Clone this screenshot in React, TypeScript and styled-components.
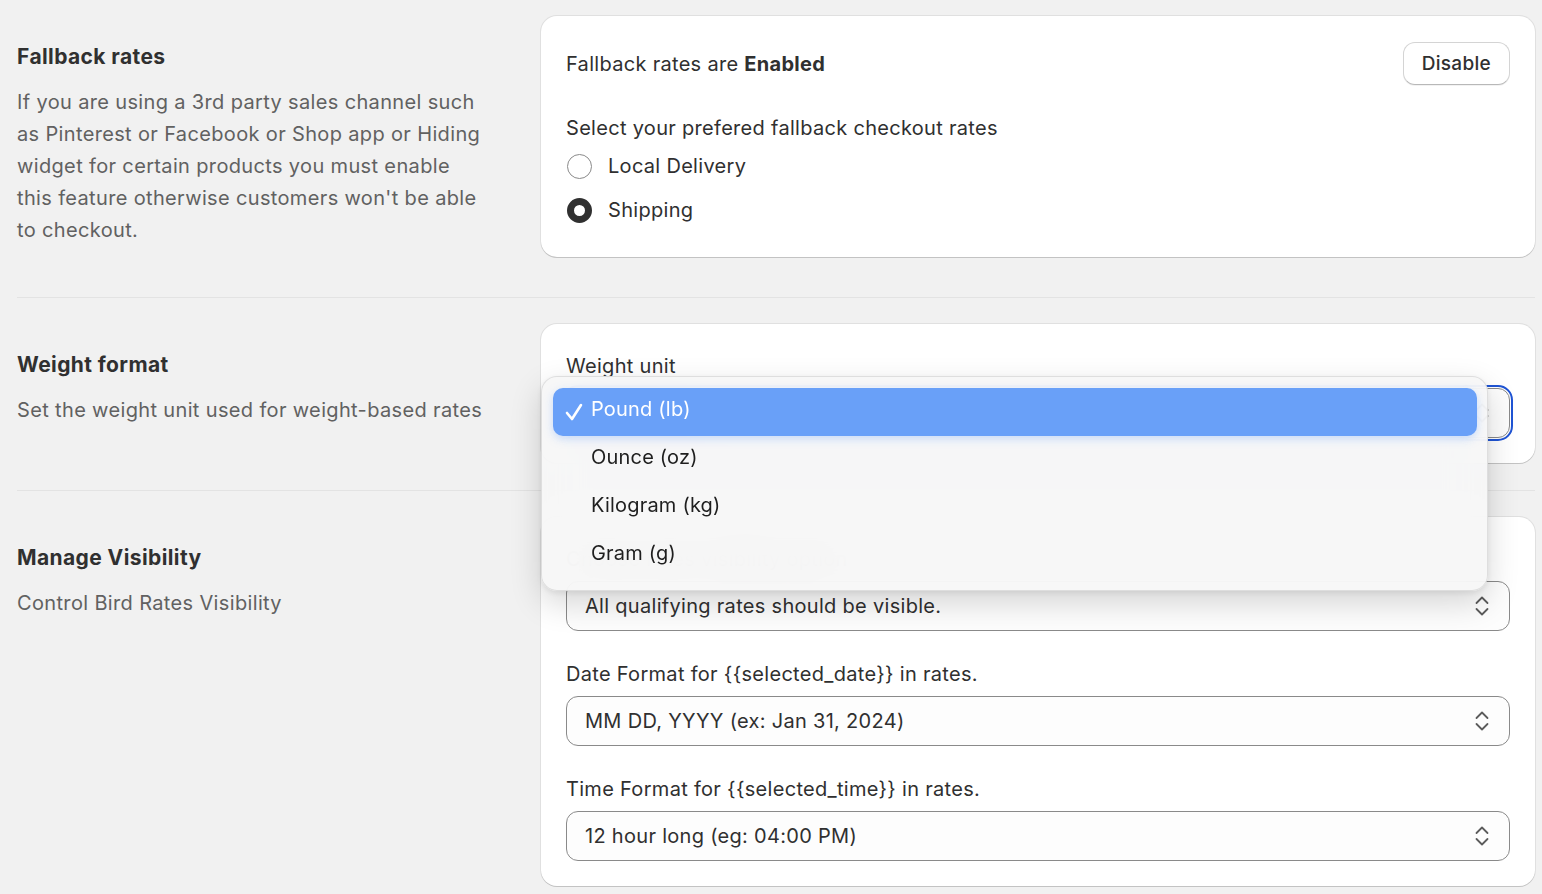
import { createGlobalStyle } from "styled-components";
import styled from "styled-components";

const GlobalStyle = createGlobalStyle`
  html, body {
    margin: 0;
    padding: 0;
    background: #f1f1f1;
  }
  body {
    font-family: "Inter", "Noto Sans", sans-serif;
    color: #303030;
    -webkit-font-smoothing: antialiased;
  }
`;

const Page = styled.div`
  padding: 16px 7px 0 17px;
  min-height: 894px;
  box-sizing: border-box;
`;

const Section = styled.section<{ $gapBelow?: number }>`
  display: grid;
  grid-template-columns: 483px 1fr;
  column-gap: 41px;
  align-items: start;
  margin-bottom: ${(p) => p.$gapBelow ?? 27}px;
`;

const Aside = styled.div`
  padding-top: 29px;
`;

const Title = styled.h2`
  margin: 0;
  font-size: 21px;
  line-height: 24px;
  font-weight: 650;
  letter-spacing: 0.4px;
  color: #303030;
`;

const Desc = styled.p`
  margin: 17px 0 0;
  max-width: 468px;
  font-size: 20px;
  line-height: 32px;
  letter-spacing: 0.35px;
  color: #616161;
`;

const Divider = styled.hr`
  border: 0;
  height: 1px;
  background: #e3e3e3;
  margin: 0 0 26px;
`;

const Card = styled.div<{ $raised?: boolean }>`
  position: relative;
  z-index: ${(p) => (p.$raised ? 2 : 1)};
  background: #fff;
  border-radius: 16px;
  padding: 26px 25px 25px;
  box-shadow: 0 1px 0 rgba(0, 0, 0, 0.13), 0 0 0 1px rgba(0, 0, 0, 0.07);
`;

const HeaderRow = styled.div`
  display: flex;
  align-items: center;
  justify-content: space-between;
`;

const Text = styled.div`
  font-size: 20px;
  line-height: 32px;
  letter-spacing: 0.3px;
  color: #303030;

  strong {
    font-weight: 650;
  }
`;

const Button = styled.button`
  height: 43px;
  padding: 0 18px;
  font-family: inherit;
  font-size: 19px;
  font-weight: 500;
  letter-spacing: 0.3px;
  color: #303030;
  background: #fff;
  border: 1px solid #d4d4d4;
  border-bottom-color: #b8b8b8;
  border-radius: 12px;
  box-shadow: 0 1px 0 rgba(0, 0, 0, 0.05);
`;

const ChoiceLabel = styled(Text)`
  margin-top: 27px;
`;

const RadioRow = styled.label`
  display: flex;
  align-items: center;
  gap: 16px;
  height: 44px;
  font-size: 20px;
  letter-spacing: 0.3px;
  color: #303030;
`;

const Radio = styled.span<{ $checked?: boolean }>`
  width: 25px;
  height: 25px;
  margin-left: 1px;
  box-sizing: border-box;
  border-radius: 50%;
  background: #fff;
  border: ${(p) => (p.$checked ? "7.5px solid #303030" : "1.5px solid #8a8a8a")};
`;

const Fields = styled.div`
  display: flex;
  flex-direction: column;
  gap: 27px;
`;

const Field = styled.div`
  display: flex;
  flex-direction: column;
  gap: 6px;
`;

const SelectWrap = styled.div`
  position: relative;
`;

const SelectBox = styled.div<{ $focused?: boolean }>`
  height: 50px;
  box-sizing: border-box;
  display: flex;
  align-items: center;
  justify-content: space-between;
  padding: 0 19px 0 18px;
  border: 1px solid #8a8a8a;
  border-radius: 12px;
  background: #fdfdfd;
  font-size: 20px;
  letter-spacing: 0.3px;
  color: #303030;
  outline: ${(p) => (p.$focused ? "2.5px solid #1f54d4" : "none")};
  outline-offset: 1px;
`;

const Menu = styled.div`
  position: absolute;
  top: -12px;
  left: -25px;
  right: 22px;
  z-index: 5;
  padding: 11px 10px 10px 11px;
  border-radius: 16px;
  background: rgba(246, 246, 246, 0.93);
  backdrop-filter: blur(22px);
  border: 1px solid rgba(0, 0, 0, 0.1);
  box-shadow: 0 12px 32px rgba(0, 0, 0, 0.16), 0 2px 6px rgba(0, 0, 0, 0.08);
`;

const MenuItem = styled.div<{ $active?: boolean }>`
  position: relative;
  height: 48px;
  box-sizing: border-box;
  display: flex;
  align-items: center;
  padding: 0 0 6px 38px;
  border-radius: 10px;
  font-size: 20px;
  letter-spacing: 0.2px;
  color: ${(p) => (p.$active ? "#fff" : "#1f1f1f")};
  background: ${(p) => (p.$active ? "#69a0f8" : "transparent")};
  box-shadow: ${(p) => (p.$active ? "0 3px 10px rgba(105, 160, 248, 0.35)" : "none")};
`;

const Check = styled.svg`
  position: absolute;
  left: 11px;
  top: 14px;
`;

const Chevrons = () => (
  <svg width="16" height="24" viewBox="0 0 16 24" fill="none">
    <path d="M2.5 9l5.5-5.5 5.5 5.5" stroke="#5c5c5c" strokeWidth="1.8" strokeLinecap="round" strokeLinejoin="round" />
    <path d="M2.5 15l5.5 5.5 5.5-5.5" stroke="#5c5c5c" strokeWidth="1.8" strokeLinecap="round" strokeLinejoin="round" />
  </svg>
);

const weightUnits = ["Pound (lb)", "Ounce (oz)", "Kilogram (kg)", "Gram (g)"];

const SelectField = ({ label, value }: { label: string; value: string }) => (
  <Field>
    <Text>{label}</Text>
    <SelectBox>
      <span>{value}</span>
      <Chevrons />
    </SelectBox>
  </Field>
);

export default function App() {
  return (
    <Page>
      <GlobalStyle />

      <Section $gapBelow={40}>
        <Aside>
          <Title>Fallback rates</Title>
          <Desc>
            If you are using a 3rd party sales channel such as Pinterest or Facebook or Shop app or Hiding
            widget for certain products you must enable this feature otherwise customers won't be able to
            checkout.
          </Desc>
        </Aside>
        <Card>
          <HeaderRow>
            <Text>
              Fallback rates are <strong>Enabled</strong>
            </Text>
            <Button>Disable</Button>
          </HeaderRow>
          <ChoiceLabel>Select your prefered fallback checkout rates</ChoiceLabel>
          <RadioRow>
            <Radio />
            Local Delivery
          </RadioRow>
          <RadioRow>
            <Radio $checked />
            Shipping
          </RadioRow>
        </Card>
      </Section>
      <Divider />

      <Section>
        <Aside>
          <Title>Weight format</Title>
          <Desc>Set the weight unit used for weight-based rates</Desc>
        </Aside>
        <Card $raised>
          <Field>
            <Text>Weight unit</Text>
            <SelectWrap>
              <SelectBox $focused>
                <span>Pound (lb)</span>
                <Chevrons />
              </SelectBox>
              <Menu>
                {weightUnits.map((u, i) => (
                  <MenuItem key={u} $active={i === 0}>
                    {i === 0 && (
                      <Check width="20" height="20" viewBox="0 0 20 20" fill="none">
                        <path d="M3 11l5 6L17 3" stroke="#fff" strokeWidth="2.6" strokeLinecap="round" strokeLinejoin="round" />
                      </Check>
                    )}
                    {u}
                  </MenuItem>
                ))}
              </Menu>
            </SelectWrap>
          </Field>
        </Card>
      </Section>
      <Divider />

      <Section>
        <Aside>
          <Title>Manage Visibility</Title>
          <Desc>Control Bird Rates Visibility</Desc>
        </Aside>
        <Card>
          <Fields>
            <SelectField label="Choose rates visibility option" value="All qualifying rates should be visible." />
            <SelectField label="Date Format for {{selected_date}} in rates." value="MM DD, YYYY (ex: Jan 31, 2024)" />
            <SelectField label="Time Format for {{selected_time}} in rates." value="12 hour long (eg: 04:00 PM)" />
          </Fields>
        </Card>
      </Section>
    </Page>
  );
}
